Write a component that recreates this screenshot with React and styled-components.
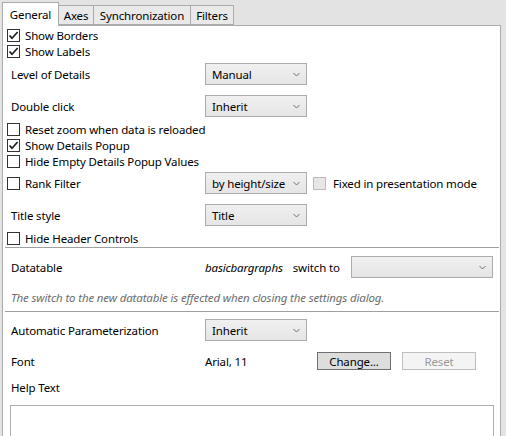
import styled, { createGlobalStyle } from 'styled-components';

const GlobalStyle = createGlobalStyle`
  html, body {
    margin: 0;
    padding: 0;
    background: #e3e3e3;
    overflow: hidden;
  }
  body {
    font-family: "Noto Sans", "Open Sans", sans-serif;
    font-size: 11.5px;
    letter-spacing: -0.15px;
    color: #000;
  }
`;

const Window = styled.div`
  width: 506px;
  height: 436px;
  padding: 2px 5px 0 2px;
  box-sizing: border-box;
  display: flex;
  flex-direction: column;
`;

const TabStrip = styled.div`
  display: flex;
  align-items: flex-end;
  height: 23px;
  flex-shrink: 0;
  position: relative;
  z-index: 1;
`;

const Tab = styled.div`
  width: ${(props) => props.$w}px;
  height: ${(props) => (props.$active ? '24px' : '20px')};
  box-sizing: border-box;
  display: flex;
  align-items: center;
  justify-content: center;
  padding-top: ${(props) => (props.$active ? '0' : '1px')};
  background: ${(props) => (props.$active ? '#fff' : '#e9e9e9')};
  border: 1px solid #acacac;
  border-bottom: ${(props) => (props.$active ? 'none' : '1px solid #acacac')};
  margin-bottom: ${(props) => (props.$active ? '-1px' : '0')};
  margin-left: ${(props) => (props.$first ? '0' : '-1px')};
  white-space: nowrap;
`;

const Panel = styled.div`
  flex: 1;
  background: #fff;
  border: 1px solid #acacac;
  border-bottom: none;
  display: flex;
  flex-direction: column;
  overflow: hidden;

  & > * {
    flex-shrink: 0;
  }
`;

const CheckRow = styled.label`
  display: flex;
  align-items: center;
  height: ${(props) => props.$h || 16}px;
  padding-left: 4px;
  margin-top: ${(props) => props.$mt || 0}px;
  white-space: nowrap;
`;

const Box = styled.span`
  width: 13px;
  height: 13px;
  box-sizing: border-box;
  border: 1px solid ${(props) => (props.$disabled ? '#bcbcbc' : '#333')};
  background: ${(props) => (props.$disabled ? '#e6e6e6' : '#fff')};
  margin-left: ${(props) => props.$ml || 0}px;
  margin-right: ${(props) => props.$mr || 5}px;
  display: flex;
  align-items: center;
  justify-content: center;
  flex-shrink: 0;
`;

const FieldRow = styled.div`
  display: flex;
  align-items: center;
  height: ${(props) => props.$h || 22}px;
  padding-left: 8px;
  margin-top: ${(props) => props.$mt || 0}px;
  white-space: nowrap;
`;

const Label = styled.span`
  width: ${(props) => props.$w || 194}px;
  flex-shrink: 0;
`;

const Combo = styled.div`
  width: ${(props) => props.$w || 102}px;
  height: 22px;
  box-sizing: border-box;
  border: 1px solid #acacac;
  background: linear-gradient(#f0f0f0, #e5e5e5);
  display: flex;
  align-items: center;
  justify-content: space-between;
  padding: 0 6px 0 6px;
  flex-shrink: 0;
  margin-left: ${(props) => props.$ml || 0}px;
`;

const Chevron = styled.svg`
  width: 7px;
  height: 5px;
  flex-shrink: 0;
`;

const Italic = styled.span`
  font-style: italic;
`;

const Plain = styled.span`
  margin-left: ${(props) => props.$ml || 0}px;
  width: ${(props) => (props.$w ? `${props.$w}px` : 'auto')};
  flex-shrink: 0;
`;

const Note = styled.div`
  height: 16px;
  display: flex;
  align-items: center;
  padding-left: 8px;
  margin-top: 11px;
  font-style: italic;
  color: #6d6d6d;
  white-space: nowrap;
`;

const Separator = styled.div`
  height: 1px;
  background: #a0a0a0;
  margin: ${(props) => props.$mt || 0}px 1px 0 2px;
`;

const Button = styled.div`
  width: 74px;
  height: 18px;
  box-sizing: border-box;
  display: flex;
  align-items: center;
  justify-content: center;
  border: 1px solid ${(props) => (props.$disabled ? '#bfbfbf' : '#707070')};
  background: ${(props) => (props.$disabled ? '#f4f4f4' : '#dddddd')};
  color: ${(props) => (props.$disabled ? '#9a9a9a' : '#000')};
  margin-left: ${(props) => props.$ml || 0}px;
  flex-shrink: 0;
`;

const HelpArea = styled.div`
  margin: 10px 6px 0 7px;
  height: 60px;
  border: 1px solid #acacac;
`;

function Check({ checked, disabled, children, mt }) {
  return (
    <CheckRow $mt={mt}>
      <Box $disabled={disabled}>
        {checked && (
          <svg width="11" height="11" viewBox="0 0 11 11">
            <path d="M1.5 5.5 L4 8.2 L9.6 2" fill="none" stroke="#1f1f1f" strokeWidth="1.7" />
          </svg>
        )}
      </Box>
      {children}
    </CheckRow>
  );
}

function Select({ value, w, ml }) {
  return (
    <Combo $w={w} $ml={ml}>
      <span>{value}</span>
      <Chevron viewBox="0 0 7 5">
        <path d="M0.5 1 L3.5 4 L6.5 1" fill="none" stroke="#707070" strokeWidth="1" />
      </Chevron>
    </Combo>
  );
}

export default function App() {
  return (
    <>
      <GlobalStyle />
      <Window>
        <TabStrip>
          <Tab $active $first $w={57}>General</Tab>
          <Tab $w={36}>Axes</Tab>
          <Tab $w={98}>Synchronization</Tab>
          <Tab $w={44}>Filters</Tab>
        </TabStrip>
        <Panel>
          <Check checked mt={1}>Show Borders</Check>
          <Check checked>Show Labels</Check>
          <FieldRow $mt={4}>
            <Label>Level of Details</Label>
            <Select value="Manual" />
          </FieldRow>
          <FieldRow $mt={10}>
            <Label>Double click</Label>
            <Select value="Inherit" />
          </FieldRow>
          <Check mt={4}>Reset zoom when data is reloaded</Check>
          <Check checked>Show Details Popup</Check>
          <Check>Hide Empty Details Popup Values</Check>
          <CheckRow as="div" $mt={3} $h={22}>
            <Box />
            <Label $w={180}>Rank Filter</Label>
            <Select value="by height/size" />
            <Box $disabled $ml={6} $mr={7} />
            <span>Fixed in presentation mode</span>
          </CheckRow>
          <FieldRow $mt={10}>
            <Label>Title style</Label>
            <Select value="Title" />
          </FieldRow>
          <Check mt={4}>Hide Header Controls</Check>
          <Separator $mt={1} />
          <FieldRow $mt={8}>
            <Label>Datatable</Label>
            <Italic>basicbargraphs</Italic>
            <Plain $ml={10}>switch to</Plain>
            <Select value="" w={142} ml={11} />
          </FieldRow>
          <Note>The switch to the new datatable is effected when closing the settings dialog.</Note>
          <Separator $mt={6} />
          <FieldRow $mt={7}>
            <Label>Automatic Parameterization</Label>
            <Select value="Inherit" />
          </FieldRow>
          <FieldRow $mt={11} $h={18}>
            <Label>Font</Label>
            <Plain $w={112}>Arial, 11</Plain>
            <Button>Change...</Button>
            <Button $disabled $ml={11}>Reset</Button>
          </FieldRow>
          <FieldRow $mt={9} $h={16}>
            <span>Help Text</span>
          </FieldRow>
          <HelpArea />
        </Panel>
      </Window>
    </>
  );
}
